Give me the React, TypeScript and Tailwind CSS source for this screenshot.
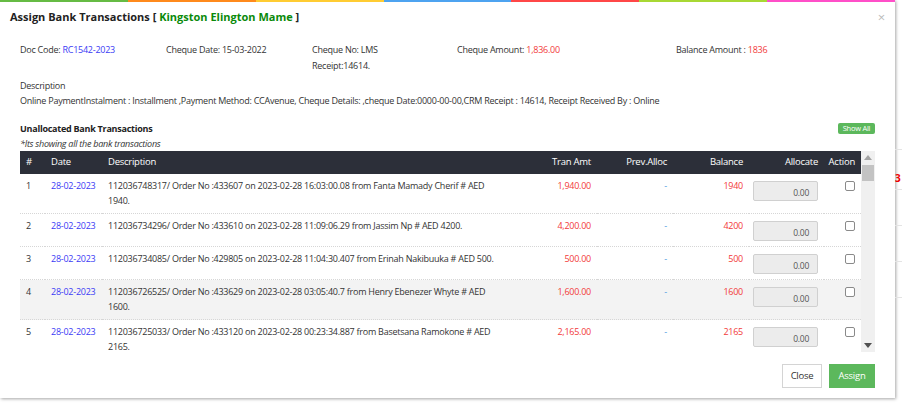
import React from 'react';

const STRIPE = ['#66bb44', '#ff8a1c', '#ffcc33', '#4da3f0', '#ff4747', '#a8d834', '#ff4fc8'];

type Txn = {
  no: number;
  date: string;
  desc: string;
  amt: string;
  bal: string;
};

const TXNS: Txn[] = [
  { no: 1, date: '28-02-2023', desc: '112036748317/ Order No :433607 on 2023-02-28 16:03:00.08 from Fanta Mamady Cherif # AED 1940.', amt: '1,940.00', bal: '1940' },
  { no: 2, date: '28-02-2023', desc: '112036734296/ Order No :433610 on 2023-02-28 11:09:06.29 from Jassim Np # AED 4200.', amt: '4,200.00', bal: '4200' },
  { no: 3, date: '28-02-2023', desc: '112036734085/ Order No :429805 on 2023-02-28 11:04:30.407 from Erinah Nakibuuka # AED 500.', amt: '500.00', bal: '500' },
  { no: 4, date: '28-02-2023', desc: '112036726525/ Order No :433629 on 2023-02-28 03:05:40.7 from Henry Ebenezer Whyte # AED 1600.', amt: '1,600.00', bal: '1600' },
  { no: 5, date: '28-02-2023', desc: '112036725033/ Order No :433120 on 2023-02-28 00:23:34.887 from Basetsana Ramokone # AED 2165.', amt: '2,165.00', bal: '2165' },
];

function Scrollbar() {
  return (
    <div className="w-[14px] bg-[#f0f0f0] flex flex-col items-center">
      <svg className="mt-[4px]" width="8" height="5" viewBox="0 0 8 5">
        <path d="M0 5 L4 0 L8 5 Z" fill="#a3a3a3" />
      </svg>
      <div className="mt-[5px] w-[12px] h-[16px] bg-[#c3c3c3]" />
      <div className="flex-1" />
      <svg className="mb-[4px]" width="8" height="5" viewBox="0 0 8 5">
        <path d="M0 0 L8 0 L4 5 Z" fill="#505050" />
      </svg>
    </div>
  );
}

export default function App() {
  return (
    <div className="flex w-full h-[403px] bg-white overflow-hidden" style={{ fontFamily: '"Open Sans", "Liberation Sans", sans-serif' }}>
      <div className="w-[895px] h-[398px] flex-none bg-white shadow-[1px_1px_3px_rgba(0,0,0,0.35)] flex flex-col text-[9px] tracking-[-0.25px] text-[#333]">
        {/* colour stripe */}
        <div className="flex h-[2px]">
          {STRIPE.map((c) => (
            <div key={c} className="flex-1" style={{ backgroundColor: c }} />
          ))}
        </div>

        {/* title */}
        <div className="h-[30px] flex items-center justify-between pl-[10px] pr-[10px]">
          <h1 className="text-[11px] tracking-normal font-bold text-[#222]">
            Assign Bank Transactions [ <span className="text-[#0a8a0a]">Kingston Elington Mame</span> ]
          </h1>
          <span className="text-[13px] text-[#bbb] leading-none">×</span>
        </div>

        <div className="px-[20px] flex flex-col">
          {/* info */}
          <div className="mt-[10px] grid grid-cols-[146px_146px_145px_219px_1fr] leading-[16px]">
            <div>Doc Code: <span className="text-[#3b3bf5]">RC1542-2023</span></div>
            <div>Cheque Date: 15-03-2022</div>
            <div>Cheque No: LMS<br />Receipt:14614.</div>
            <div>Cheque Amount: <span className="text-[#f23a3a]">1,836.00</span></div>
            <div>Balance Amount : <span className="text-[#f23a3a]">1836</span></div>
          </div>

          <div className="mt-[4px] leading-[15px]">
            <div>Description</div>
            <div>Online PaymentInstalment : Installment ,Payment Method: CCAvenue, Cheque Details: ,cheque Date:0000-00-00,CRM Receipt : 14614, Receipt Received By : Online</div>
          </div>

          {/* transactions header */}
          <div className="mt-[13px] flex items-center justify-between leading-[15px]">
            <div className="font-bold text-[#222]">Unallocated Bank Transactions</div>
            <button className="h-[11px] w-[37px] bg-[#5cb85c] text-white text-[7.5px] leading-[11px] rounded-[2px]">Show All</button>
          </div>
          <div className="italic leading-[15px]">*Its showing all the bank transactions</div>

          {/* table */}
          <div className="flex h-[201px]">
            <div className="w-[841px] overflow-hidden">
              <table className="w-[841px] table-fixed border-collapse">
                <colgroup>
                  <col className="w-[25px]" />
                  <col className="w-[57px]" />
                  <col className="w-[418px]" />
                  <col className="w-[77px]" />
                  <col className="w-[76px]" />
                  <col className="w-[76px]" />
                  <col className="w-[75px]" />
                  <col className="w-[37px]" />
                </colgroup>
                <thead>
                  <tr className="h-[23px] bg-[#2c2f39] text-white text-[9.5px]">
                    <th className="px-[6px] font-normal text-left">#</th>
                    <th className="px-[6px] font-normal text-left">Date</th>
                    <th className="px-[6px] font-normal text-left">Description</th>
                    <th className="px-[6px] font-normal text-right">Tran Amt</th>
                    <th className="px-[6px] font-normal text-right">Prev.Alloc</th>
                    <th className="px-[6px] font-normal text-right">Balance</th>
                    <th className="px-[6px] font-normal text-right">Allocate</th>
                    <th className="pl-[2px] pr-[6px] font-normal text-right">Action</th>
                  </tr>
                </thead>
                <tbody className="leading-[15px]">
                  {TXNS.map((t) => (
                    <tr key={t.no} className={`border-b border-dotted border-[#d6d6d6] ${t.no === 4 ? 'bg-[#f3f3f3]' : ''}`}>
                      <td className="align-top px-[6px] pt-[4px] pb-[5px] text-[#333]">{t.no}</td>
                      <td className="align-top px-[6px] pt-[4px] pb-[5px] text-[#3b3bf5]">{t.date}</td>
                      <td className="align-top px-[6px] pt-[4px] pb-[5px]">
                        <div className="max-w-[392px]">{t.desc}</div>
                      </td>
                      <td className="align-top px-[6px] pt-[4px] pb-[5px] text-right text-[#f23a3a]">{t.amt}</td>
                      <td className="align-top px-[6px] pt-[4px] pb-[5px] text-right text-[#4a9be0]">-</td>
                      <td className="align-top px-[6px] pt-[4px] pb-[5px] text-right text-[#f23a3a]">{t.bal}</td>
                      <td className="align-top pl-[4px] pr-[6px] pt-[4px] pb-[5px]">
                        <div className="mt-[3px] h-[20px] w-[65px] border border-[#d0d0d0] bg-[#ececec] rounded-[2px] text-right pr-[8px] pt-[3px] text-[8.5px] text-[#555]">0.00</div>
                      </td>
                      <td className="align-top pr-[6px] pt-[4px] pb-[5px]">
                        <div className="mt-[3px] ml-auto w-[10px] h-[10px] border border-[#8a8a8a] rounded-[2px] bg-white" />
                      </td>
                    </tr>
                  ))}
                </tbody>
              </table>
            </div>
            <Scrollbar />
          </div>

          {/* footer */}
          <div className="mt-[12px] flex justify-end gap-[7px]">
            <button className="h-[24px] w-[40px] border border-[#d4d4d4] bg-white text-[#333] text-[9.5px]">Close</button>
            <button className="h-[24px] w-[46px] bg-[#5cb85c] text-white text-[9.5px]">Assign</button>
          </div>
        </div>
      </div>

      {/* page behind the modal */}
      <div className="flex-1 flex flex-col">
        <div className="h-[150px] border-b border-[#e4e4e4]" />
        <div className="h-[40px] border-b border-[#e4e4e4] pt-[23px] text-[10px] font-bold text-[#e00] leading-none">3</div>
        <div className="h-[36px] border-b border-[#e4e4e4]" />
        <div className="h-[36px] border-b border-[#e4e4e4]" />
        <div className="h-[36px] border-b border-[#e4e4e4]" />
      </div>
    </div>
  );
}
